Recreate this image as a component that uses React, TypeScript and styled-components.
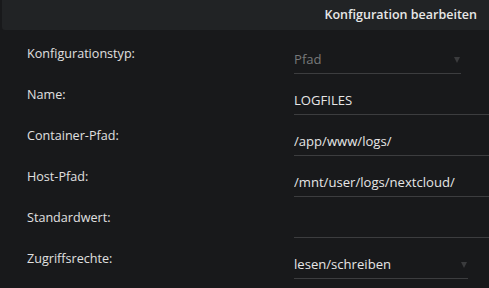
import React from "react";
import styled, { createGlobalStyle } from "styled-components";

const Global = createGlobalStyle`
  html, body { margin: 0; padding: 0; background: #18191b; }
  body { font-family: "Open Sans", "Noto Sans", sans-serif; color: #e2e2e2; }
  * { box-sizing: border-box; }
`;

const Page = styled.div`
  width: 489px;
  height: 288px;
  overflow: hidden;
  background: #18191b;
`;

const Header = styled.header`
  margin-left: 2px;
  height: 30px;
  background: #212325;
  border-bottom-left-radius: 3px;
  display: flex;
  justify-content: flex-end;
  align-items: center;
  padding-right: 12px;
`;

const Title = styled.h1`
  margin: 0;
  font-size: 12.5px;
  font-weight: 600;
  line-height: 30px;
  color: #e8e8e8;
`;

const Form = styled.div`
  padding-top: 10px;
  display: flex;
  flex-direction: column;
`;

const Row = styled.div`
  height: 41px;
  display: grid;
  grid-template-columns: 267px 1fr;
  padding-left: 27px;
  align-items: start;
`;

const Label = styled.label`
  padding-top: 6px;
  font-size: 12.6px;
  line-height: 16px;
  color: #e0e0e0;
`;

const Field = styled.div<{ $width?: number }>`
  position: relative;
  margin-top: 8px;
  width: ${(p) => (p.$width ? `${p.$width}px` : "auto")};
`;

const TextInput = styled.input`
  display: block;
  width: 100%;
  height: 26px;
  margin: 0;
  padding: 0 0 3px 0;
  border: none;
  border-bottom: 1px solid #3c3d3f;
  background: transparent;
  font-family: inherit;
  font-size: 13.1px;
  color: #e6e6e6;
  outline: none;
`;

const Select = styled.select<{ $disabled?: boolean }>`
  display: block;
  width: 100%;
  height: 26px;
  margin: 0;
  padding: 0 0 3px 0;
  border: none;
  border-bottom: 1px solid #3c3d3f;
  background: transparent;
  appearance: none;
  -webkit-appearance: none;
  font-family: inherit;
  font-size: 13.1px;
  color: ${(p) => (p.$disabled ? "#777879" : "#e6e6e6")};
  opacity: 1;
  outline: none;
  option { background: #18191b; }
`;

const Arrow = styled.span<{ $right: number }>`
  position: absolute;
  right: ${(p) => p.$right}px;
  top: 9px;
  width: 0;
  height: 0;
  border-left: 3.5px solid transparent;
  border-right: 3.5px solid transparent;
  border-top: 6px solid #3a3b3d;
  pointer-events: none;
`;

export default function App() {
  return (
    <Page>
      <Global />
      <Header>
        <Title>Konfiguration bearbeiten</Title>
      </Header>
      <Form>
        <Row>
          <Label>Konfigurationstyp:</Label>
          <Field $width={167}>
            <Select $disabled defaultValue="Pfad" disabled>
              <option>Pfad</option>
            </Select>
            <Arrow $right={1} />
          </Field>
        </Row>
        <Row>
          <Label>Name:</Label>
          <Field>
            <TextInput readOnly value="LOGFILES" />
          </Field>
        </Row>
        <Row>
          <Label>Container-Pfad:</Label>
          <Field>
            <TextInput readOnly value="/app/www/logs/" />
          </Field>
        </Row>
        <Row>
          <Label>Host-Pfad:</Label>
          <Field>
            <TextInput readOnly value="/mnt/user/logs/nextcloud/" />
          </Field>
        </Row>
        <Row>
          <Label>Standardwert:</Label>
          <Field>
            <TextInput readOnly value="" />
          </Field>
        </Row>
        <Row>
          <Label>Zugriffsrechte:</Label>
          <Field $width={174}>
            <Select defaultValue="lesen/schreiben">
              <option>lesen/schreiben</option>
              <option>nur lesen</option>
            </Select>
            <Arrow $right={1} />
          </Field>
        </Row>
      </Form>
    </Page>
  );
}
